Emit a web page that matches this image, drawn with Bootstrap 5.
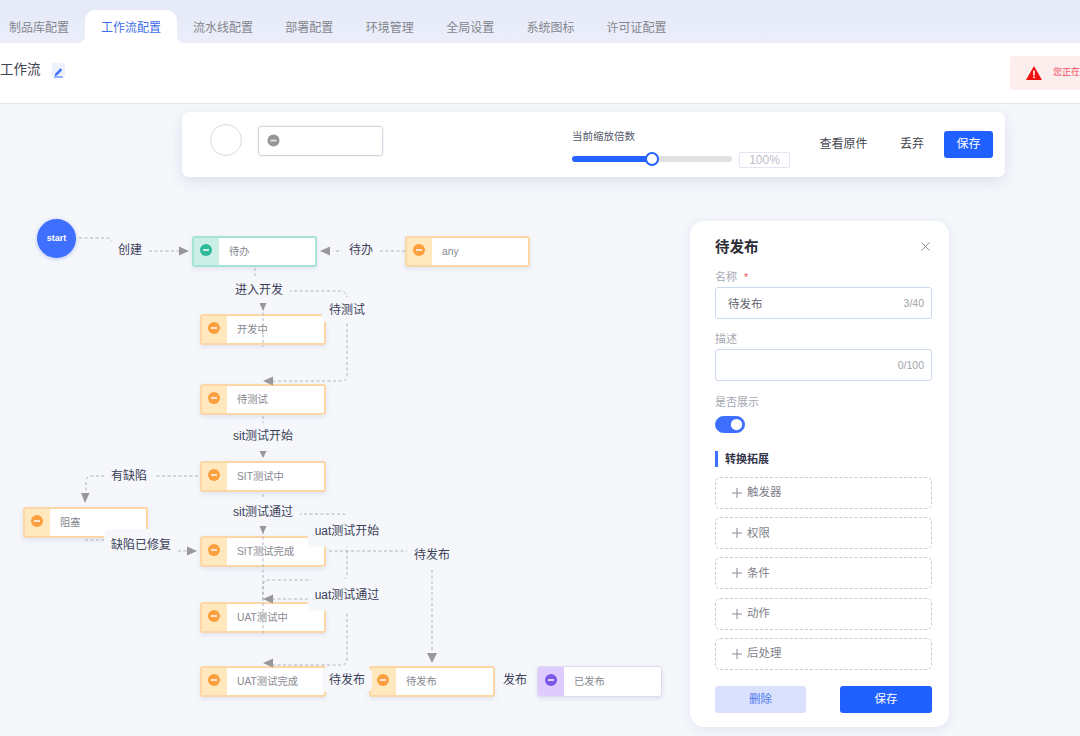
<!DOCTYPE html>
<html lang="zh">
<head>
<meta charset="utf-8">
<title>工作流配置</title>
<link href="https://cdn.jsdelivr.net/npm/bootstrap@5.3.0/dist/css/bootstrap.min.css" rel="stylesheet">
<style>
html,body{height:736px;overflow:hidden}
body{font-family:"Liberation Sans","Noto Sans CJK SC",sans-serif;background:#f5f7fb;color:#3b3f55;font-size:12px}
.tabbar{height:43px;background:linear-gradient(#e5e9f8,#ebeefa);padding-left:0;margin:0;flex-wrap:nowrap}
.tabbar .nav-link{height:33px;margin-top:10px;padding:0 16px;line-height:36px;font-size:12px;color:#85868c;position:relative;white-space:nowrap}
.tabbar .wide-tab{padding:0 16.25px}
.tabbar .first-tab{margin-left:-7px}
.tabbar .nav-link.active{background:#fff;color:#3d6ee8;border-radius:10px 10px 0 0}
.tabbar .nav-link.active::before,.tabbar .nav-link.active::after{content:"";position:absolute;bottom:0;width:8px;height:8px}
.tabbar .nav-link.active::before{left:-8px;background:radial-gradient(circle at 0 0,transparent 8px,#fff 8.5px)}
.tabbar .nav-link.active::after{right:-8px;background:radial-gradient(circle at 100% 0,transparent 8px,#fff 8.5px)}
.pagehead{height:61px;background:#fff;border-bottom:1px solid #e4e6ee;overflow:hidden}
.pagehead-title{font-size:13.5px;color:#3f4250;line-height:20px;margin-top:17px}
.edit-chip{width:13px;height:13px;background:#edf0fd;margin-left:11.5px;margin-top:20px;border-radius:1px}
.warnbox{position:absolute;left:1010px;top:56px;width:70px;height:34px;background:#fdeeee;border-radius:3px 0 0 3px;color:#f5475a;font-size:9px;white-space:nowrap;padding-left:16px;gap:11px}
.stage{position:relative;height:632px;overflow:hidden}
.toolbar{position:relative;z-index:3;width:823px;height:65px;margin:8px 0 0 182px;background:#fff;border-radius:7px;box-shadow:0 5px 14px rgba(190,198,222,.45)}
.ring{position:absolute;left:28px;top:12px;width:32px;height:32px;border:1px solid #d9dbe6;border-radius:50%}
.statebox{position:absolute;left:76px;top:14px;width:125px;height:30px;border:1px solid #d5d6e2;border-radius:3px;box-shadow:0 0 2px rgba(180,180,200,.4)}
.grey-dot{position:absolute;left:8px;top:7px}
.zoomcap{position:absolute;left:390px;top:16px;font-size:10.5px;line-height:16px;color:#55586a}
.zoomrange{position:absolute;left:390px;top:40px;width:160px;height:14px;margin:0;-webkit-appearance:none;appearance:none;background:transparent}
.zoomrange::-webkit-slider-runnable-track{height:6px;border-radius:3px;background:linear-gradient(90deg,#2463ff 50%,#e2e2e4 50%)}
.zoomrange::-webkit-slider-thumb{-webkit-appearance:none;width:14px;height:14px;margin-top:-4px;border-radius:50%;background:#fff;border:2.5px solid #2463ff}
.zoomval{position:absolute;left:557px;top:40px;width:51px;height:16px;border:1px solid #e2e5f2;border-radius:2px;font-size:12px;line-height:14px;text-align:center;color:#bbbdc8}
.tool-btn{position:absolute;top:19px;height:27px;padding:0;border:0;font-size:12px;line-height:27px;color:#444650;background:transparent;white-space:nowrap}
.tb-a{left:637px;width:49px}.tb-b{left:718px;width:24px}
.tb-c{left:762px;width:49px;background:#2060ff;color:#fff;border-radius:3px}
.tb-c:hover,.tb-a:hover,.tb-b:hover{background-color:inherit}
.wire{position:absolute;left:0;top:0;z-index:1;pointer-events:none}
.fnode{position:absolute;width:126px;height:31px;background:#fff;border:2px solid #fdd6a6;border-radius:3px;box-shadow:0 2px 5px rgba(200,205,225,.45);font-size:10.3px;color:#878890;line-height:28px;padding-left:35px;overflow:hidden}
.fnode::before{content:"";position:absolute;left:0;top:0;bottom:0;width:25px;background:#ffe8bd}
.fnode i{position:absolute;left:6px;top:6px;width:12px;height:12px;border-radius:50%;background:#fb9f3f}
.fnode i::after{content:"";position:absolute;left:3px;top:5.2px;width:6px;height:1.4px;background:rgba(255,255,255,.75)}
.fnode.teal{border-color:#a4e3d6}.fnode.teal::before{background:#cbefe7}.fnode.teal i{background:#2fb99b}
.fnode.violet{border:1px solid #dcdcec;padding-left:36px;line-height:30px;box-shadow:0 2px 4px rgba(190,196,224,.4)}.fnode.violet::before{background:#dfccff;width:26px}.fnode.violet i{background:#7b57e6;left:7px;top:7px}
.n1{left:192px;top:132px;width:125px}.n2{left:405px;top:132px;width:125px}.n3{left:200px;top:210px}.n4{left:200px;top:280px}
.n5{left:200px;top:357px}.n6{left:23px;top:403px;width:125px}.n7{left:200px;top:432px}.n8{left:200px;top:498px}
.n9{left:200px;top:562px}.n10{left:369px;top:562px}.n11{left:537px;top:562px;width:125px}
.startdot{position:absolute;left:37px;top:115px;width:39px;height:39px;border-radius:50%;background:#3f6fff;color:#fff;font-size:9px;font-weight:700;line-height:39px;text-align:center;box-shadow:0 1px 4px rgba(90,120,230,.4)}
.flabel{position:absolute;z-index:2;transform:translate(-50%,-50%);background:#f5f7fb;border-radius:7px;padding:5px 7px;font-size:12px;line-height:16px;white-space:nowrap;color:#3c3f58}
.l1{left:130px;top:146px}.l2{left:361px;top:146px}.l3{left:259px;top:186px}.l4{left:347px;top:206px}
.l5{left:263px;top:332px}.l6{left:129px;top:372px}.l7{left:263px;top:408px}.l8{left:141px;top:441px;padding:8px 7px 8px 7px}
.l9{left:347px;top:427px;padding:8px 7px}.l10{left:432px;top:451px}.l11{left:347px;top:491px;padding:8px 7px}
.l12{left:347px;top:576px}.l13{left:515px;top:576px}
.sidepanel{position:absolute;z-index:4;left:690px;top:117px;width:259px;height:506px;background:#fff;border-radius:14px;box-shadow:0 2px 12px rgba(190,198,222,.35);padding:16px 17px 0 25px}
.sp-head{margin-bottom:13px}
.sp-title{font-size:14.5px;font-weight:700;line-height:20px;color:#2b2c36}
.sp-close{width:9px;height:9px;margin-top:5px;margin-right:2px}
.sp-label{font-size:11px;line-height:15px;color:#a6a8b4;margin-bottom:2px}
.sp-label b{color:#f2555f;font-weight:400;margin-left:4px}
.sp-field{position:relative;height:32px;margin-bottom:14px}
.sp-field.sp-tight{margin-bottom:13px}
.sp-field .form-control{height:32px;padding:0 12px;font-size:11.5px;color:#62646e;border:1px solid #cbd8ef;border-radius:3px;box-shadow:none}
.sp-count{position:absolute;right:8px;top:8px;font-size:10.5px;line-height:16px;color:#a0a2aa}
.sp-switch{height:17px;margin-top:6px;margin-bottom:18px;padding:0;min-height:0}
.sp-switch .form-check-input{width:30px;height:17px;margin:0;background-color:#3f6fff;border-color:#3f6fff;float:none;display:block}
.sp-subhead{font-size:11px;font-weight:700;line-height:16px;color:#33354a;border-left:3px solid #3f6fff;padding-left:7px;margin-bottom:10px}
.sp-add{display:flex;align-items:center;width:100%;height:32px;margin-bottom:8.2px;padding:0 0 0 16px;background:#fff;border:1px dashed #c9ccd6;border-radius:5px;color:#7f818b;font-size:11.5px;gap:5px}
.sp-add svg{flex:none}
.sp-actions{display:flex;justify-content:space-between;margin-top:16px}
.sp-actions .btn{height:27px;padding:0;font-size:11.5px;line-height:27px;border:0;border-radius:3px}
.sp-del{width:91px;background:#d9e1fc;color:#4d78ee}
.sp-save{width:92px;background:#2060ff;color:#fff}
</style>
</head>
<body>
<ul class="nav tabbar">
  <li class="nav-item"><a class="nav-link first-tab" href="#">制品库配置</a></li>
  <li class="nav-item"><a class="nav-link active" href="#">工作流配置</a></li>
  <li class="nav-item"><a class="nav-link" href="#">流水线配置</a></li>
  <li class="nav-item"><a class="nav-link wide-tab" href="#">部署配置</a></li>
  <li class="nav-item"><a class="nav-link wide-tab" href="#">环境管理</a></li>
  <li class="nav-item"><a class="nav-link wide-tab" href="#">全局设置</a></li>
  <li class="nav-item"><a class="nav-link" href="#">系统图标</a></li>
  <li class="nav-item"><a class="nav-link" href="#">许可证配置</a></li>
</ul>
<div class="pagehead d-flex">
  <div class="pagehead-title">工作流</div>
  <div class="edit-chip"><svg width="13" height="13" viewBox="0 0 13 13"><path d="M3.2 7.8 8.4 2.300l1.800 1.700-5.200 5.400-2.300.5z" fill="#3f6fff"/><rect x="2" y="10.500" width="9" height="1.100" fill="#3f6fff"/></svg></div>
</div>
<div class="warnbox d-flex align-items-center">
  <svg width="16" height="14" viewBox="0 0 16 14"><path d="M8 0 16 14H0z" fill="#f01010"/><rect x="7.2" y="4.5" width="1.6" height="5" fill="#fff"/><rect x="7.2" y="10.5" width="1.6" height="1.6" fill="#fff"/></svg>
  <span>您正在</span>
</div>
<div class="stage">
  <div class="toolbar">
    <div class="ring"></div>
    <div class="statebox"><svg class="grey-dot" width="13" height="13" viewBox="0 0 13 13"><circle cx="6.5" cy="6.5" r="6" fill="#969696"/><rect x="3.5" y="5.6" width="6" height="1.8" fill="#e5e5e5"/></svg></div>
    <div class="zoomcap">当前缩放倍数</div>
    <input class="zoomrange" type="range" min="0" max="100" value="50" aria-label="缩放">
    <div class="zoomval">100%</div>
    <button class="btn tool-btn tb-a" type="button">查看原件</button>
    <button class="btn tool-btn tb-b" type="button">丢弃</button>
    <button class="btn tool-btn tb-c" type="button">保存</button>
  </div>

  <div class="startdot">start</div>
  <div class="fnode teal n1"><i></i>待办</div>
  <div class="fnode n2"><i></i>any</div>
  <div class="fnode n3"><i></i>开发中</div>
  <div class="fnode n4"><i></i>待测试</div>
  <div class="fnode n5"><i></i>SIT测试中</div>
  <div class="fnode n6"><i></i>阻塞</div>
  <div class="fnode n7"><i></i>SIT测试完成</div>
  <div class="fnode n8"><i></i>UAT测试中</div>
  <div class="fnode n9"><i></i>UAT测试完成</div>
  <div class="fnode n10"><i></i>待发布</div>
  <div class="fnode violet n11"><i></i>已发布</div>

  <svg class="wire" width="1080" height="632" viewBox="0 104 1080 632" fill="none" stroke="#b0b2b8" stroke-width="1" stroke-dasharray="3 2.5">
    <path d="M79 238H108q3 0 4 3"/>
    <path d="M149 251H180"/>
    <path d="M405 251H333"/>
    <path d="M255 268V276"/>
    <path d="M263 296V347"/>
    <path d="M283 291H340q6 0 7 6V375q0 6-6 6H272"/>
    <path d="M263 416V424"/>
    <path d="M198 476H92q-6 0-6 6V494"/>
    <path d="M85 540H110"/>
    <path d="M178 551H188"/>
    <path d="M263 494V502"/>
    <path d="M263 520V600"/>
    <path d="M293 514H342q5 0 5 5V574q0 6-6 6H269q-6 0-6 6V636"/>
    <path d="M272 599H310"/>
    <path d="M347 608V659q0 6-6 6H272"/>
    <path d="M329 551H408"/>
    <path d="M432 570V652"/>
    <g fill="#989898" stroke="none">
      <path d="M189 251 179 246.5V255.5Z"/>
      <path d="M320 251 330 246.5V255.5Z"/>
      <path d="M263 311 259.5 303H266.5Z"/>
      <path d="M263 381 273 376.5V385.5Z"/>
      <path d="M263 458 259.5 451H266.5Z"/>
      <path d="M85 503 81 493H89.5Z"/>
      <path d="M197 551 187 546.5V555.5Z"/>
      <path d="M263 534 259.5 526H266.5Z"/>
      <path d="M263 599 273 594.5V603.5Z"/>
      <path d="M263 663 273 658.5V667.5Z"/>
      <path d="M432 663 427 653H437Z"/>
    </g>
  </svg>

  <div class="flabel l1">创建</div>
  <div class="flabel l2">待办</div>
  <div class="flabel l3">进入开发</div>
  <div class="flabel l4">待测试</div>
  <div class="flabel l5">sit测试开始</div>
  <div class="flabel l6">有缺陷</div>
  <div class="flabel l7">sit测试通过</div>
  <div class="flabel l8">缺陷已修复</div>
  <div class="flabel l9">uat测试开始</div>
  <div class="flabel l10">待发布</div>
  <div class="flabel l11">uat测试通过</div>
  <div class="flabel l12">待发布</div>
  <div class="flabel l13">发布</div>

  <aside class="sidepanel">
    <div class="d-flex justify-content-between sp-head">
      <div class="sp-title">待发布</div>
      <svg class="sp-close" viewBox="0 0 9 9" stroke="#8c8f9c" stroke-width="1"><path d="M.5.5l8 8M8.500.5l-8 8"/></svg>
    </div>
    <div class="sp-label">名称 <b>*</b></div>
    <div class="sp-field sp-tight"><input class="form-control" type="text" value="待发布" aria-label="名称"><span class="sp-count">3/40</span></div>
    <div class="sp-label">描述</div>
    <div class="sp-field"><input class="form-control" type="text" aria-label="描述"><span class="sp-count">0/100</span></div>
    <div class="sp-label">是否展示</div>
    <div class="form-check form-switch sp-switch"><input class="form-check-input" type="checkbox" role="switch" checked aria-label="是否展示"></div>
    <div class="sp-subhead">转换拓展</div>
    <button class="sp-add" type="button"><svg width="10" height="10" viewBox="0 0 10 10" stroke="#8a8c96"><path d="M5 0v10M0 5h10"/></svg>触发器</button>
    <button class="sp-add" type="button"><svg width="10" height="10" viewBox="0 0 10 10" stroke="#8a8c96"><path d="M5 0v10M0 5h10"/></svg>权限</button>
    <button class="sp-add" type="button"><svg width="10" height="10" viewBox="0 0 10 10" stroke="#8a8c96"><path d="M5 0v10M0 5h10"/></svg>条件</button>
    <button class="sp-add" type="button"><svg width="10" height="10" viewBox="0 0 10 10" stroke="#8a8c96"><path d="M5 0v10M0 5h10"/></svg>动作</button>
    <button class="sp-add" type="button"><svg width="10" height="10" viewBox="0 0 10 10" stroke="#8a8c96"><path d="M5 0v10M0 5h10"/></svg>后处理</button>
    <div class="sp-actions">
      <button class="btn sp-del" type="button">删除</button>
      <button class="btn sp-save" type="button">保存</button>
    </div>
  </aside>
</div>
<script src="https://cdn.jsdelivr.net/npm/bootstrap@5.3.0/dist/js/bootstrap.bundle.min.js"></script>
</body>
</html>
